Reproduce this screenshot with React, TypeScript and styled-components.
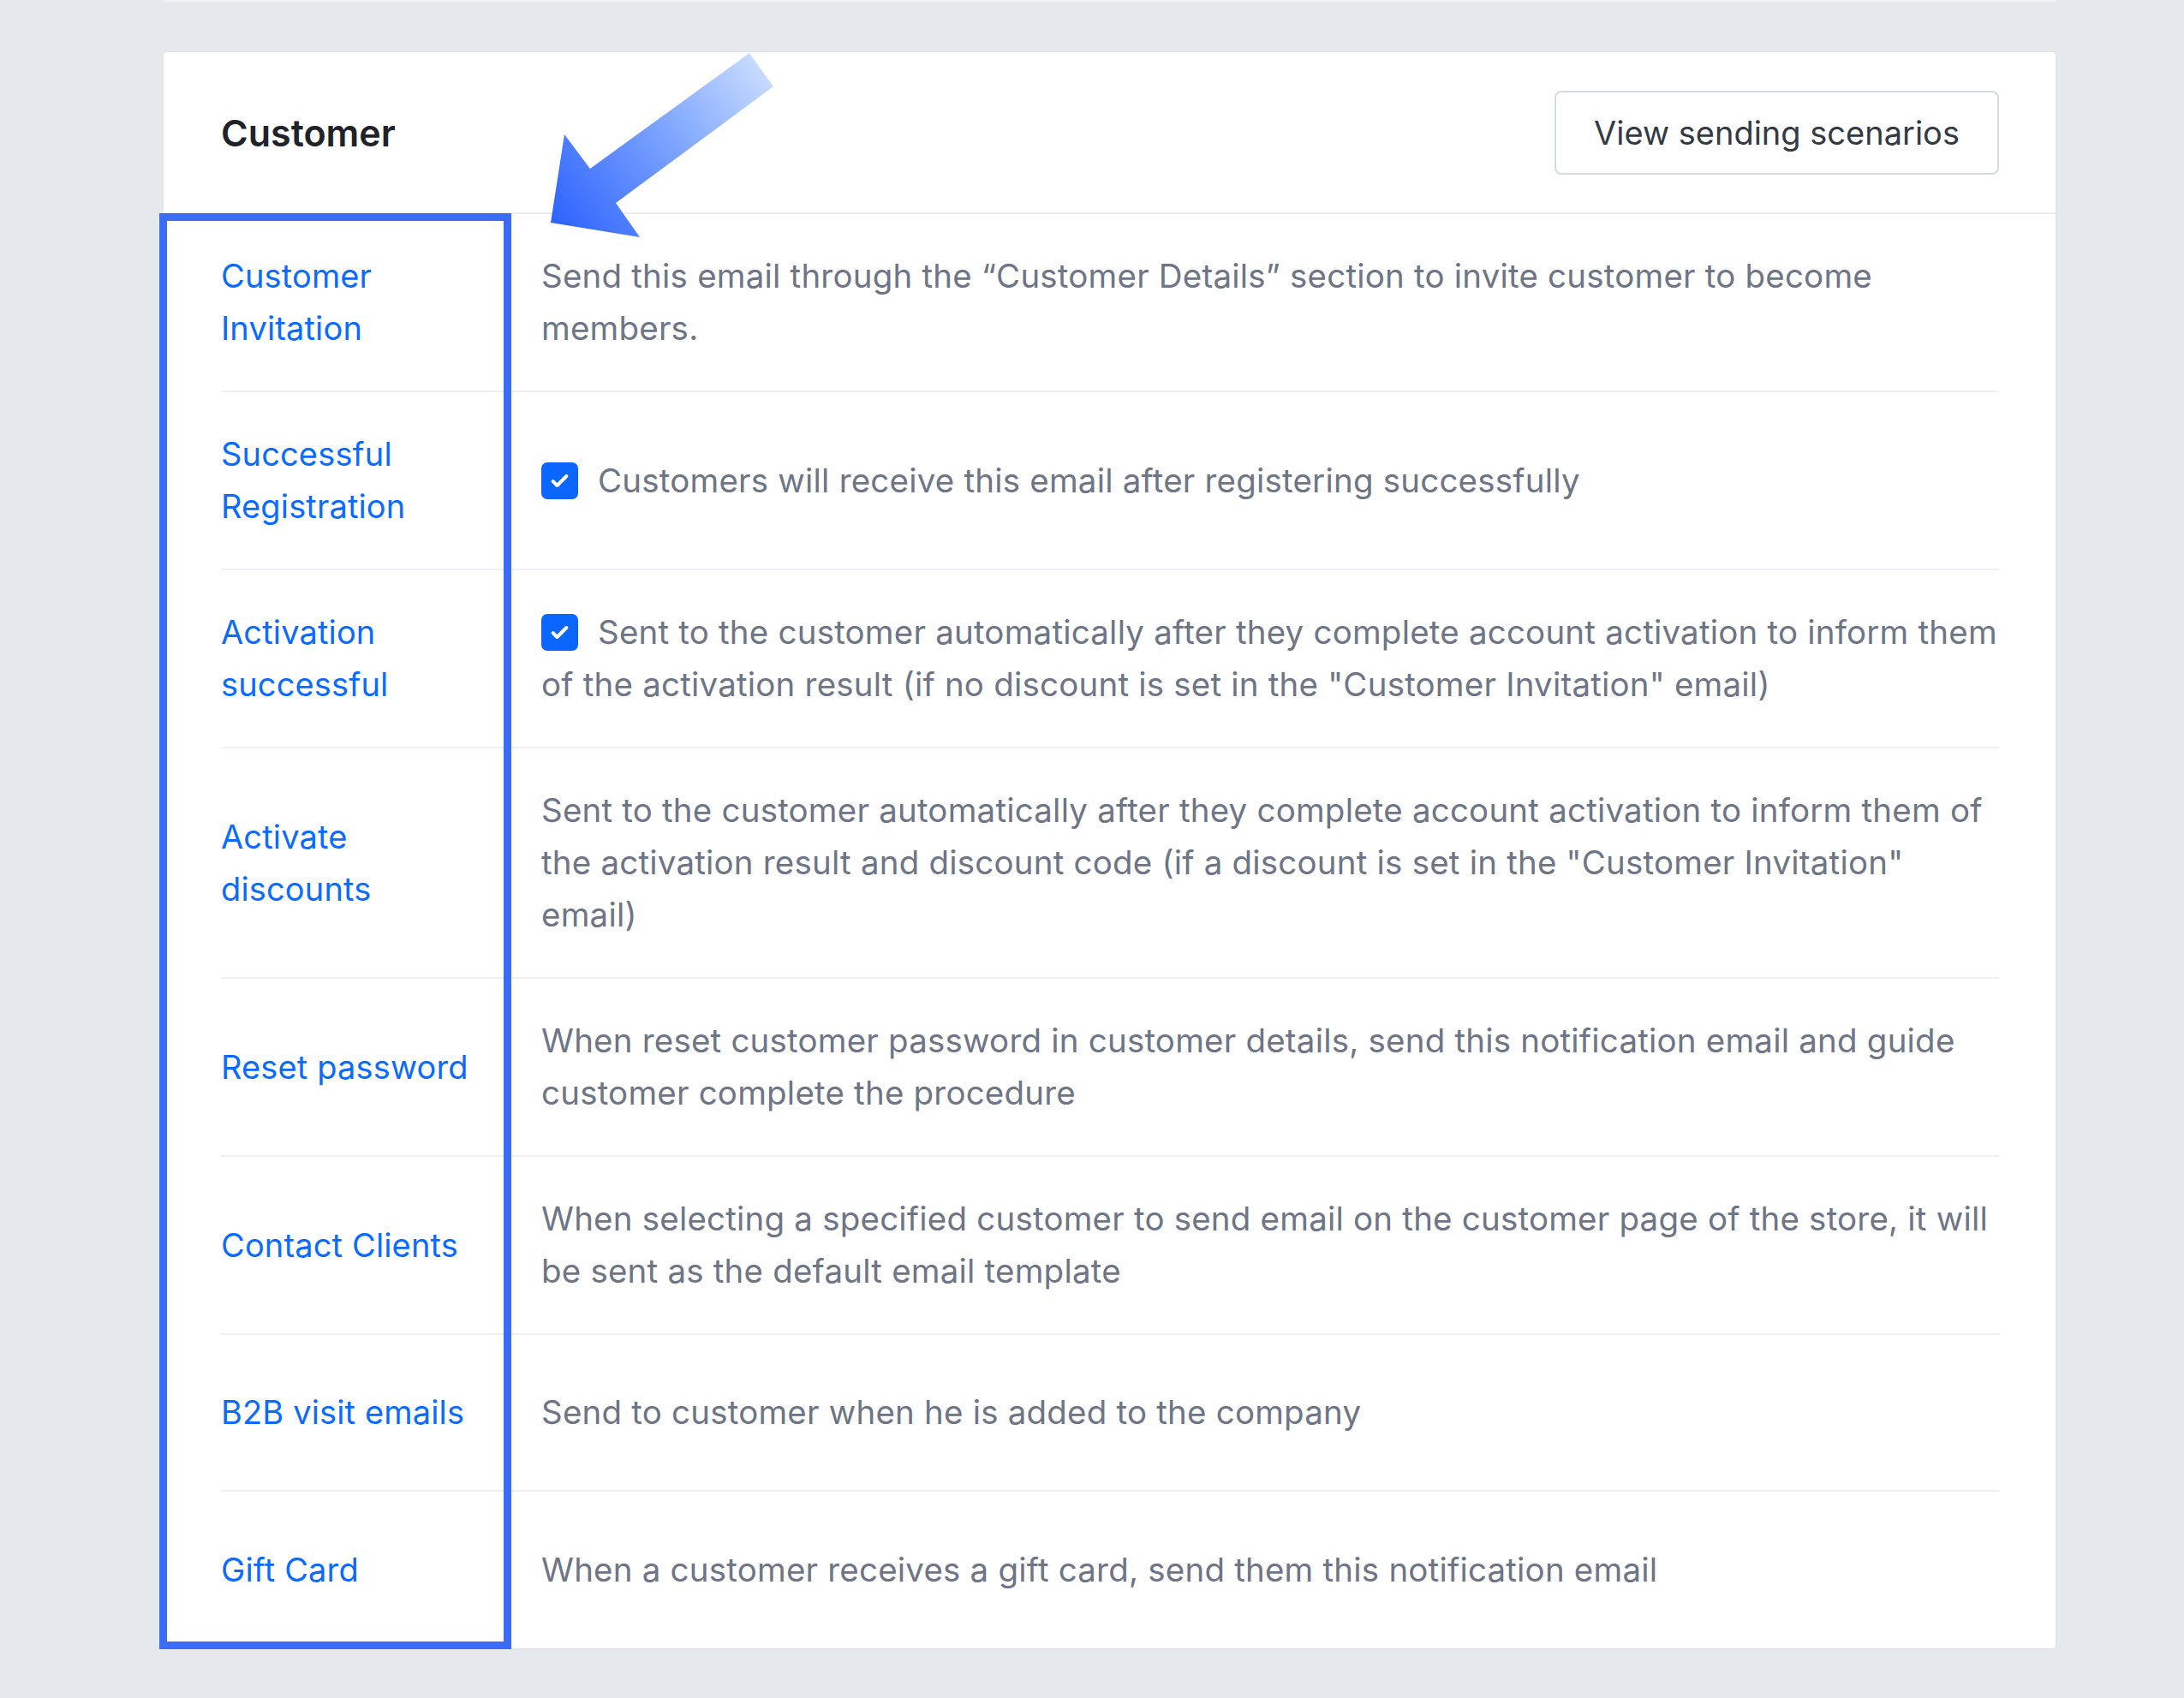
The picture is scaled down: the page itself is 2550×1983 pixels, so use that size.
import React from 'react';
import styled, { createGlobalStyle } from 'styled-components';

const GlobalStyle = createGlobalStyle`
  html, body {
    margin: 0;
    padding: 0;
    background: #e5e8ec;
  }
  body {
    font-family: Inter, Roboto, 'Liberation Sans', Arial, sans-serif;
    -webkit-font-smoothing: antialiased;
  }
  * {
    box-sizing: border-box;
  }
`;

const Page = styled.div`
  width: 2550px;
  min-height: 1983px;
  padding: 0 150px 0 191px;
  display: flex;
  flex-direction: column;
  gap: 58px;
`;

const PrevCardEdge = styled.div`
  width: 2209px;
  height: 3px;
  background: #eef0f3;
`;

const Card = styled.section`
  position: relative;
  width: 2209px;
  background: #ffffff;
  border-radius: 4px;
  box-shadow: 0 0 0 1px rgba(20, 30, 50, 0.03);
`;

const Header = styled.header`
  display: flex;
  align-items: center;
  justify-content: space-between;
  height: 189px;
  padding: 0 66px 0 67px;
  border-bottom: 2px solid #ededf0;
`;

const Title = styled.h2`
  margin: 0;
  font-size: 43px;
  font-weight: 600;
  color: #1f2329;
`;

const OutlineButton = styled.button`
  width: 519px;
  height: 98px;
  background: #ffffff;
  border: 2px solid #d6dae2;
  border-radius: 8px;
  font-family: Inter, Roboto, 'Liberation Sans', Arial, sans-serif;
  font-size: 38px;
  color: #343a43;
  cursor: pointer;
`;

const List = styled.div`
  padding: 0 66px 0 67px;
`;

const Row = styled.div`
  display: flex;
  align-items: center;
  gap: 64px;
  min-height: 183px;
  padding: 42px 0;
  border-bottom: 2px solid #eef0f4;

  &:last-child {
    border-bottom: none;
  }
`;

const Label = styled.a`
  flex: 0 0 310px;
  font-size: 38px;
  letter-spacing: 0.15px;
  line-height: 61px;
  color: #0c6bff;
  text-decoration: none;
  cursor: pointer;
`;

const Description = styled.p`
  flex: 1;
  margin: 0;
  font-size: 38.5px;
  letter-spacing: 0.2px;
  line-height: 61px;
  color: #6d7586;
`;

const Check = styled.span`
  display: inline-block;
  width: 43px;
  height: 43px;
  margin-right: 23px;
  border-radius: 7px;
  background: #0a66ff;
  vertical-align: -8px;

  svg {
    display: block;
    margin: 7px;
  }
`;

const Highlight = styled.div`
  position: absolute;
  left: -5px;
  top: 188px;
  width: 411px;
  height: 1677px;
  border: 9px solid #3b6cf7;
  pointer-events: none;
`;

const Arrow = styled.svg`
  position: absolute;
  left: 450px;
  top: 0;
  width: 265px;
  height: 220px;
  pointer-events: none;
`;

type Item = {
  label: string;
  text: string;
  checked?: boolean;
};

const items: Item[] = [
  {
    label: 'Customer Invitation',
    text: 'Send this email through the \u201cCustomer Details\u201d section to invite customer to become members.',
  },
  {
    label: 'Successful Registration',
    text: 'Customers will receive this email after registering successfully',
    checked: true,
  },
  {
    label: 'Activation successful',
    text: 'Sent to the customer automatically after they complete account activation to inform them of the activation result (if no discount is set in the "Customer Invitation" email)',
    checked: true,
  },
  {
    label: 'Activate discounts',
    text: 'Sent to the customer automatically after they complete account activation to inform them of the activation result and discount code (if a discount is set in the "Customer Invitation" email)',
  },
  {
    label: 'Reset password',
    text: 'When reset customer password in customer details, send this notification email and guide customer complete the procedure',
  },
  {
    label: 'Contact Clients',
    text: 'When selecting a specified customer to send email on the customer page of the store, it will be sent as the default email template',
  },
  {
    label: 'B2B visit emails',
    text: 'Send to customer when he is added to the company',
  },
  {
    label: 'Gift Card',
    text: 'When a customer receives a gift card, send them this notification email',
  },
];

function CheckMark() {
  return (
    <Check>
      <svg width="29" height="29" viewBox="0 0 24 24" fill="none">
        <path d="M5.5 12.5l4 4L18.5 7.5" stroke="#ffffff" strokeWidth="3.4" strokeLinecap="round" strokeLinejoin="round" />
      </svg>
    </Check>
  );
}

export default function App() {
  return (
    <Page>
      <GlobalStyle />
      <PrevCardEdge />
      <Card>
        <Header>
          <Title>Customer</Title>
          <OutlineButton type="button">View sending scenarios</OutlineButton>
        </Header>
        <List>
          {items.map((item) => (
            <Row key={item.label}>
              <Label>{item.label}</Label>
              <Description>
                {item.checked && <CheckMark />}
                {item.text}
              </Description>
            </Row>
          ))}
        </List>
        <Highlight />
        <Arrow viewBox="0 0 265 220">
          <defs>
            <linearGradient id="arrowFill" gradientUnits="userSpaceOnUse" x1="4" y1="200" x2="250" y2="18">
              <stop offset="0" stopColor="#2d62ff" />
              <stop offset="0.55" stopColor="#7ca4ff" />
              <stop offset="1" stopColor="#c9dcff" />
            </linearGradient>
          </defs>
          <polygon points="234,1 262,40 78,176 106,216 2,199 18,96 48,136" fill="url(#arrowFill)" />
        </Arrow>
      </Card>
    </Page>
  );
}
